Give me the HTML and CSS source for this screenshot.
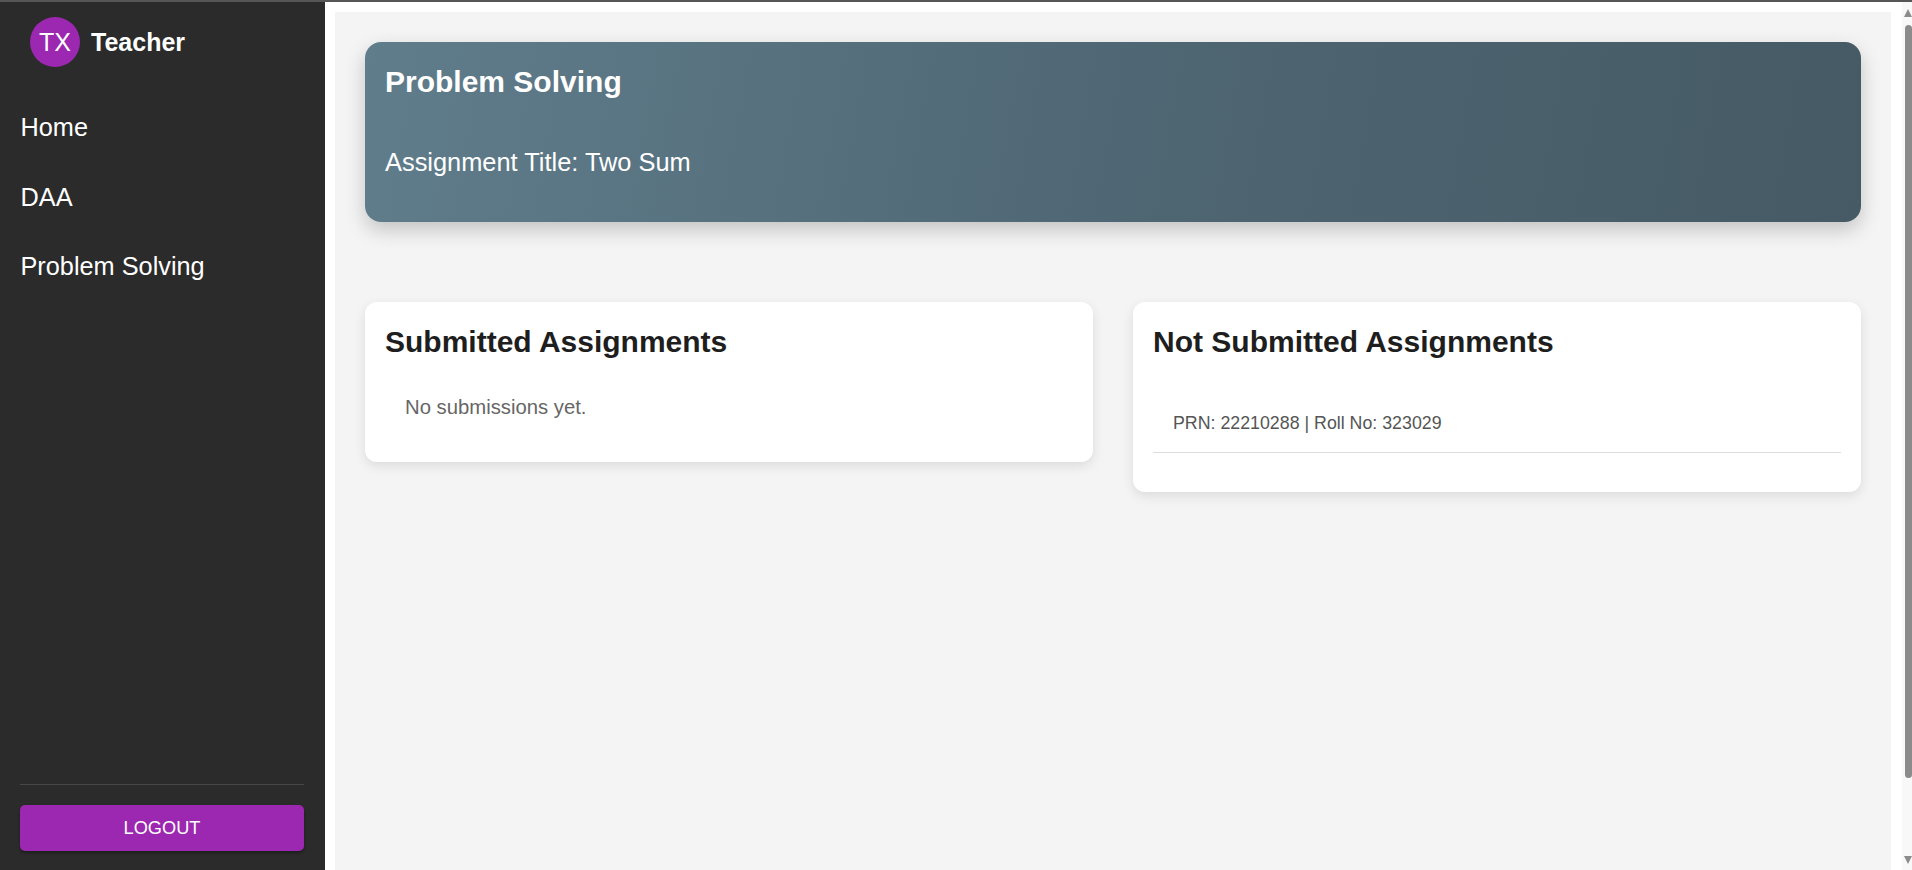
FILE: index.html
```html
<!DOCTYPE html>
<html lang="en">
<head>
<meta charset="utf-8">
<title>Teacher - Problem Solving</title>
<link rel="stylesheet" href="styles.css">
</head>
<body>
<div class="topline"></div>
<div class="app">
  <aside class="sidebar">
    <div class="brand">
      <div class="avatar">TX</div>
      <span class="brand-name">Teacher</span>
    </div>
    <nav class="nav">
      <a class="nav-link" href="#">Home</a>
      <a class="nav-link" href="#">DAA</a>
      <a class="nav-link" href="#">Problem Solving</a>
    </nav>
    <div class="sidebar-foot">
      <button class="logout">LOGOUT</button>
    </div>
  </aside>
  <main class="main">
    <div class="content">
      <section class="hero">
        <h1 class="hero-title">Problem Solving</h1>
        <p class="hero-sub">Assignment Title: Two Sum</p>
      </section>
      <div class="cards">
        <section class="card">
          <h2 class="card-title">Submitted Assignments</h2>
          <p class="empty">No submissions yet.</p>
        </section>
        <section class="card">
          <h2 class="card-title">Not Submitted Assignments</h2>
          <ul class="student-list">
            <li class="student">PRN: 22210288 | Roll No: 323029</li>
          </ul>
        </section>
      </div>
    </div>
  </main>
  <div class="scrollbar">
    <span class="arrow-up"></span>
    <span class="thumb"></span>
    <span class="arrow-down"></span>
  </div>
</div>
</body>
</html>
```
FILE: styles.css
```css
* { box-sizing: border-box; }
html, body { margin: 0; padding: 0; }
body {
  font-family: "Liberation Sans", Arial, sans-serif;
  background: #ffffff;
  overflow: hidden;
}
.topline { height: 2px; background: #565656; }
.app { display: flex; height: 868px; }

.sidebar {
  width: 325px;
  flex: 0 0 325px;
  background: #2b2b2b;
  display: flex;
  flex-direction: column;
  padding: 15px 21px 19px 20px;
}
.brand { display: flex; align-items: center; gap: 11px; padding-left: 10px; }
.avatar {
  width: 50px; height: 50px; border-radius: 50%;
  background: #9c27b0; color: #fff;
  display: flex; align-items: center; justify-content: center;
  font-size: 25px;
}
.brand-name { color: #fff; font-weight: bold; font-size: 25px; }
.nav { display: flex; flex-direction: column; margin-top: 25px; }
.nav-link {
  color: #fff; text-decoration: none; font-size: 25.3px;
  padding: 20.6px 0; line-height: 28.75px;
  margin-left: 0.5px;
}
.sidebar-foot { margin-top: auto; border-top: 1px solid #474747; padding-top: 20px; }
.logout {
  display: block; width: 100%; height: 46px;
  background: #9c27b0; color: #fff; border: 0; border-radius: 5px;
  font-family: "Liberation Sans", Arial, sans-serif; font-size: 18.2px;
  box-shadow: 0 2px 3px rgba(0,0,0,0.35);
}

.main { flex: 1; background: #fff; padding: 10px 11px 0 10px; }
.content { background: #f4f4f4; height: 100%; padding: 30px; }

.hero {
  border-radius: 16px;
  background: linear-gradient(100deg, #607d8b 0%, #4e6572 55%, #455a64 100%);
  color: #fff; padding: 23px 20px 20px;
  box-shadow: 0 8px 20px rgba(0,0,0,0.2);
}
.hero-title { margin: 0 0 48px; font-size: 30px; line-height: 34.5px; font-weight: bold; }
.hero-sub { margin: 0 0 25.5px; font-size: 25.4px; line-height: 29.2px; }

.cards {
  display: grid; grid-template-columns: 1fr 1fr; gap: 40px;
  margin-top: 80px; align-items: start;
}
.card {
  background: #fff; border-radius: 12px; padding: 23px 20px 20px;
  box-shadow: 0 4px 12px rgba(0,0,0,0.1);
}
.card-title { margin: 0; font-size: 30px; line-height: 34.5px; color: #1e1e1e; }
.empty { margin: 36px 0 23px; padding-left: 20px; font-size: 20.3px; line-height: 23px; color: #666; }
.student-list { list-style: none; margin: 34.3px 0 19px; padding: 0; }
.student {
  padding: 19px 20px 18px; font-size: 17.8px; line-height: 20.7px; color: #555;
  border-bottom: 1px solid #dddddd;
}

.scrollbar { width: 10px; flex: 0 0 10px; background: #f8f8f8; position: relative; }
.arrow-up, .arrow-down {
  position: absolute; left: 2px; width: 0; height: 0;
  border-left: 4px solid transparent; border-right: 4px solid transparent;
}
.arrow-up { top: 7px; border-bottom: 8px solid #8b8b8b; }
.arrow-down { top: 854px; border-top: 8px solid #8b8b8b; }
.thumb {
  position: absolute; left: 3px; right: 0; top: 23px; height: 753px;
  background: #8b8b8b; border-radius: 4px;
}
```
